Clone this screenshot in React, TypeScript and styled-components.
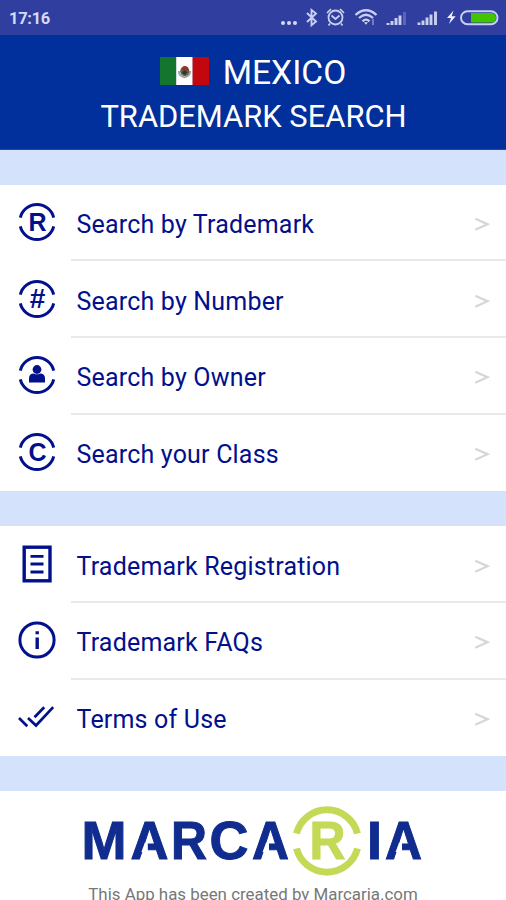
import React from "react";
import styled, { createGlobalStyle } from "styled-components";

const NAVY = "#02108c";

const GlobalStyle = createGlobalStyle`
  * { box-sizing: border-box; }
  body { margin: 0; background: #fff; font-family: Roboto, "Open Sans", sans-serif; }
`;

const Screen = styled.div`
  width: 506px;
  height: 900px;
  overflow: hidden;
  display: flex;
  flex-direction: column;
  background: #fff;
  > * { flex-shrink: 0; }
`;

const StatusBar = styled.div`
  height: 35px;
  padding: 1px 6px 0 9px;
  display: flex;
  align-items: center;
  justify-content: space-between;
  background: #303f9f;
  color: #d5daf5;
`;

const Clock = styled.span`
  font-size: 16.5px;
  font-weight: 700;
  letter-spacing: -0.3px;
`;

const Header = styled.header`
  height: 114.5px;
  padding-top: 16px;
  display: flex;
  flex-direction: column;
  align-items: center;
  background: #012f9b;
  border-bottom: 1px solid #2446a8;
  color: #fff;
`;

const Country = styled.div`
  height: 43px;
  display: flex;
  align-items: center;
  gap: 14px;
  font-size: 33.6px;
`;

const Flag = styled.svg`
  display: block;
  margin-top: -3px;
`;

const Title = styled.div`
  height: 44px;
  line-height: 45px;
  padding-left: 1px;
  font-size: 30.9px;
  white-space: nowrap;
`;

const Band = styled.div`
  height: 35px;
  background: #d4e2fb;
`;

const List = styled.nav`
  display: flex;
  flex-direction: column;
`;

const Row = styled.div`
  height: 76.7px;
  display: flex;
`;

const IconCell = styled.div`
  width: 70.5px;
  padding: 17.5px 0 0 17px;
  svg { display: block; }
`;

const RowBody = styled.div<{ $last: boolean }>`
  flex: 1;
  display: flex;
  align-items: center;
  justify-content: space-between;
  padding: 4px 16px 0 6px;
  border-bottom: 2px solid ${(p) => (p.$last ? "transparent" : "#e9e9eb")};
`;

const Label = styled.span`
  padding-top: 1px;
  font-size: 25px;
  letter-spacing: 0.19px;
  color: ${NAVY};
  white-space: nowrap;
`;

const Chevron = styled.svg`
  display: block;
`;

const Footer = styled.footer`
  flex: 1;
  display: flex;
  flex-direction: column;
  align-items: center;
`;

const Credit = styled.div`
  font-size: 16.9px;
  line-height: 20px;
  margin-top: -2px;
  color: #777;
  white-space: nowrap;
`;

const Arcs = () => (
  <path d="M3.3 15.6A17.2 17.2 0 0 1 36.7 15.6M3.3 24.4A17.2 17.2 0 0 0 36.7 24.4" fill="none" stroke={NAVY} strokeWidth="3" />
);

const LetterMark = ({ letter, size }: { letter: string; size: number }) => (
  <svg width="40" height="40" viewBox="0 0 40 40">
    <Arcs />
    <text x="20.5" y="28.8" textAnchor="middle" fontFamily="Liberation Sans, sans-serif" fontWeight="700" fontSize={size} fill={NAVY}>
      {letter}
    </text>
  </svg>
);

const OwnerMark = () => (
  <svg width="40" height="40" viewBox="0 0 40 40">
    <Arcs />
    <circle cx="20" cy="14.5" r="4.4" fill={NAVY} />
    <path d="M12 27.5V23.5Q12 18.5 17 18.5Q20 20.2 23 18.5Q28 18.5 28 23.5V27.5Z" fill={NAVY} />
  </svg>
);

const DocumentMark = () => (
  <svg width="40" height="40" viewBox="0 0 40 40" fill="none" stroke={NAVY}>
    <rect x="7.2" y="3.2" width="25.8" height="33.6" strokeWidth="3.4" />
    <path d="M13.5 12.3H26.5M13.5 20H26.5M13.5 28H26.5" strokeWidth="2.8" />
  </svg>
);

const InfoMark = () => (
  <svg width="40" height="40" viewBox="0 0 40 40" fill="none" stroke={NAVY}>
    <circle cx="20" cy="20" r="17.1" strokeWidth="3" />
    <path d="M20.2 17.6V29M20.2 11.2V14.3" strokeWidth="3.4" />
  </svg>
);

const ChecksMark = () => (
  <svg width="40" height="40" viewBox="0 0 40 40" fill="none" stroke={NAVY} strokeWidth="2.7">
    <path d="M2 21L10.3 29.3M11 21L19 28.5L36.2 10.2M17.5 20.2L27.2 10.2" />
  </svg>
);

const StatusIcons = () => (
  <svg width="222" height="28" viewBox="278 4 222 28" fill="none" stroke="#c8cff0">
    <g fill="#d5daf5" stroke="none">
      <circle cx="283" cy="23" r="2" />
      <circle cx="289" cy="23" r="2" />
      <circle cx="295" cy="23" r="2" />
    </g>
    <path d="M307 13L316 21.5L311.5 25.3V10L316 13.5L307 22" strokeWidth="1.9" />
    <circle cx="335.5" cy="17.5" r="7" strokeWidth="1.8" />
    <path d="M327 13L331 9M344 13L340 9M331.5 15.5L335.5 19L339.5 15.5M330 23.5L328.5 25.5M341 23.5L342.5 25.5" strokeWidth="1.7" />
    <path d="M355.5 15Q366 5.5 376.5 15M359 18Q366 11.5 373 18M362.5 21.3Q366 18 369.5 21.3" strokeWidth="2.3" />
    <path d="M364 22.2H368L366 24.8Z" fill="#d5daf5" stroke="none" />
    <path d="M373 19V25" strokeWidth="1.6" opacity=".55" />
    <g strokeWidth="2.9">
      <path d="M388 25V23M392 25V21M396 25V18M400 25V15.5" />
      <path d="M404.5 25V12" opacity=".28" />
      <path d="M419 25V22.5M423 25V20.5M427 25V17.5M431 25V14.5M435.5 25V11.5" />
    </g>
    <path d="M453.5 10.5L447 18H451L449 24L455.7 16.3H451.7Z" fill="#eef0ff" stroke="none" />
    <rect x="461" y="11.2" width="36.5" height="13" rx="6.5" strokeWidth="2" />
    <path d="M471 13H492Q496 14 496 17.7Q496 21.5 492 22.5H471Z" fill="#42c400" stroke="none" />
  </svg>
);

const MexicoFlag = () => (
  <Flag width="49" height="28" viewBox="0 0 49 28">
    <rect width="16.4" height="28" fill="#14752f" />
    <rect x="16.2" width="16.6" height="28" fill="#fff" />
    <rect x="32.6" width="16.4" height="28" fill="#c3070f" />
    <path d="M18.8 14Q19 19.5 24.5 20.3Q30 19.5 30.3 14" fill="none" stroke="#9da59b" strokeWidth="1.8" />
    <ellipse cx="24.8" cy="14.2" rx="4.6" ry="5" fill="#675d4e" />
    <path d="M21.5 12L24 8.8L28 10.2L28.5 13L25.5 14Z" fill="#98351f" />
    <path d="M24 13L27.3 15L25 18L22 16Z" fill="#293931" />
  </Flag>
);

const LOGO_LETTERS: { ch: string; x: number; w: number }[] = [
  { ch: "M", x: 1.5, w: 45 },
  { ch: "A", x: 50.5, w: 38 },
  { ch: "R", x: 91, w: 36 },
  { ch: "C", x: 129.5, w: 39 },
  { ch: "A", x: 172, w: 37 },
  { ch: "I", x: 287, w: 15 },
  { ch: "A", x: 305, w: 37 },
];

const Logo = () => (
  <svg width="346" height="95" viewBox="0 0 346 95" fontFamily="Liberation Sans, sans-serif" fontWeight="700" fontSize="53">
    <g fill="#102c8e" stroke="#102c8e" strokeWidth="1">
      {LOGO_LETTERS.map((l) => (
        <text key={l.x} x={l.x} y="68.4" textLength={l.w} lengthAdjust="spacingAndGlyphs">
          {l.ch}
        </text>
      ))}
    </g>
    <path
      d="M64.8 51.8H67.8V61H61.4ZM186 51.8H189V61H182.6ZM319 51.8H322V61H315.6Z"
      fill="#fff"
    />
    <path d="M216.5 42.5A31.5 31.5 0 0 1 277.5 42.5M216.5 57.5A31.5 31.5 0 0 0 277.5 57.5" fill="none" stroke="#c5d957" strokeWidth="7" />
    <text x="229.5" y="68.4" fill="#c5d957" stroke="#c5d957" textLength="36" lengthAdjust="spacingAndGlyphs">R</text>
  </svg>
);

const SEARCH_ITEMS = [
  { label: "Search by Trademark", icon: <LetterMark letter="R" size={25} /> },
  { label: "Search by Number", icon: <LetterMark letter="#" size={28} /> },
  { label: "Search by Owner", icon: <OwnerMark /> },
  { label: "Search your Class", icon: <LetterMark letter="C" size={25} /> },
];

const INFO_ITEMS = [
  { label: "Trademark Registration", icon: <DocumentMark /> },
  { label: "Trademark FAQs", icon: <InfoMark /> },
  { label: "Terms of Use", icon: <ChecksMark /> },
];

const Menu = ({ items }: { items: { label: string; icon: React.ReactNode }[] }) => (
  <List>
    {items.map((item, i) => (
      <Row key={item.label}>
        <IconCell>{item.icon}</IconCell>
        <RowBody $last={i === items.length - 1}>
          <Label>{item.label}</Label>
          <Chevron width="16" height="16" viewBox="0 0 16 16">
            <path d="M1.3 2.8L13.5 8.2L1.3 13.8" fill="none" stroke="#d6d6d8" strokeWidth="2.2" />
          </Chevron>
        </RowBody>
      </Row>
    ))}
  </List>
);

export default function App() {
  return (
    <>
      <GlobalStyle />
      <Screen>
        <StatusBar>
          <Clock>17:16</Clock>
          <StatusIcons />
        </StatusBar>
        <Header>
          <Country>
            <MexicoFlag />
            MEXICO
          </Country>
          <Title>TRADEMARK SEARCH</Title>
        </Header>
        <Band />
        <Menu items={SEARCH_ITEMS} />
        <Band />
        <Menu items={INFO_ITEMS} />
        <Band />
        <Footer>
          <Logo />
          <Credit>This App has been created by Marcaria.com</Credit>
        </Footer>
      </Screen>
    </>
  );
}
